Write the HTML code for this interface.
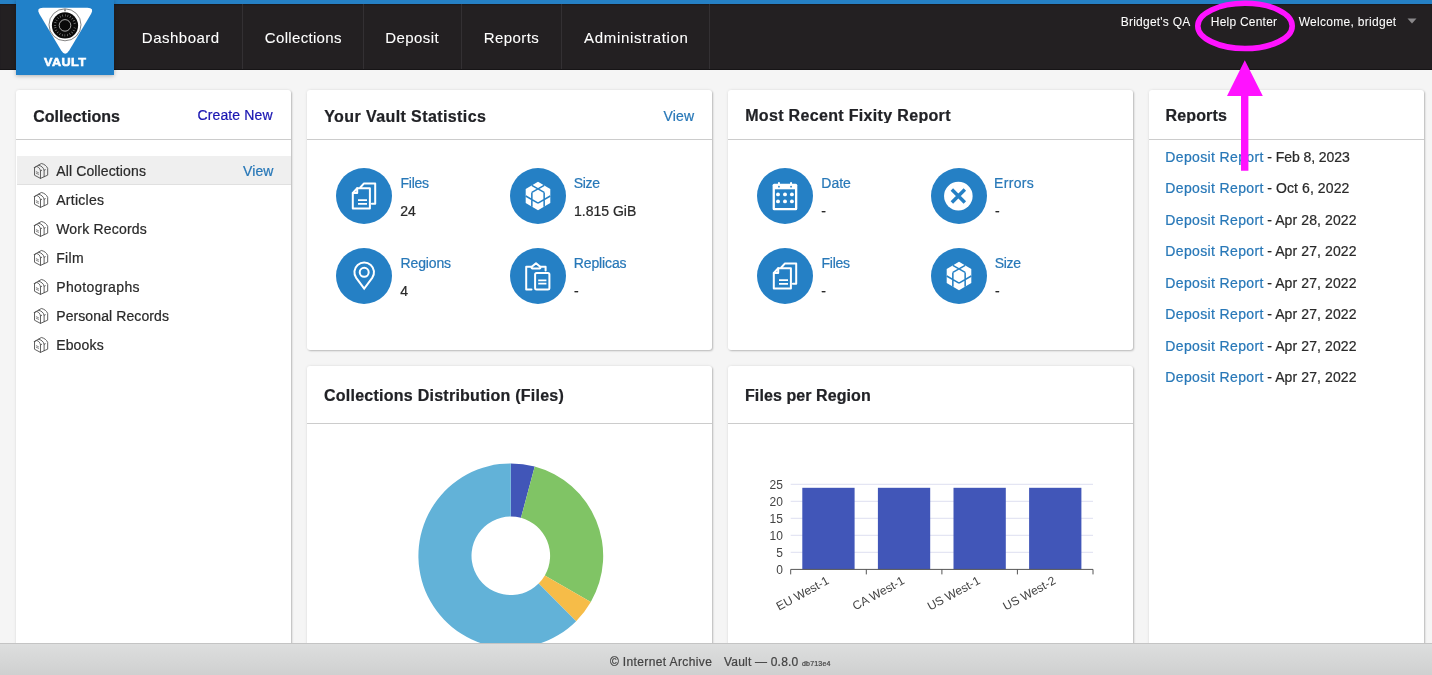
<!DOCTYPE html>
<html lang="en">
<head>
<meta charset="utf-8">
<title>Vault Dashboard</title>
<style>
html,body{margin:0;padding:0;}
body{width:1432px;height:675px;overflow:hidden;position:relative;background:#f5f5f5;
  font-family:"Liberation Sans",sans-serif;color:#2a2a2a;}
.abs{position:absolute;}
.t{position:absolute;white-space:nowrap;line-height:20px;-webkit-text-stroke:.22px;}
#wrap{position:absolute;left:0;top:0;width:1432px;height:675px;will-change:transform;}
#topbar{left:0;top:0;width:1432px;height:4px;background:#2580c5;}
#hdr{left:0;top:4px;width:1432px;height:65.6px;background:#232022;box-shadow:inset 0 -1px 0 #161416,inset 0 1px 1px #1a1a1e;}
.sep{position:absolute;top:4px;width:1px;height:65px;background:#333033;}
#logo{left:16px;top:0;width:98px;height:74.5px;background:#2181c9;box-shadow:0 1px 4px rgba(0,0,0,.28);}
.card{position:absolute;background:#fff;border-radius:3px;box-shadow:1px 1px 2px rgba(0,0,0,.22),0 0 3px rgba(0,0,0,.1);}
.hl{position:absolute;height:1px;background:#ccc;}
.lnk{color:#2176b5;}
#footer{left:0;top:643px;width:1432px;height:32px;background:linear-gradient(#dddede,#cfd0d0);border-top:1px solid #c4c4c4;box-sizing:border-box;}
</style>
</head>
<body>
<div id="wrap">
<!-- CARDS -->
<div class="card" style="left:16px;top:90px;width:275px;height:600px"></div>
<div class="card" style="left:307px;top:90px;width:405px;height:260px"></div>
<div class="card" style="left:728px;top:90px;width:405px;height:260px"></div>
<div class="card" style="left:1149px;top:90px;width:275px;height:600px"></div>
<div class="card" style="left:307px;top:366px;width:405px;height:320px"></div>
<div class="card" style="left:728px;top:366px;width:405px;height:320px"></div>
<div class="hl" style="left:16px;top:139px;width:275px"></div>
<div class="hl" style="left:307px;top:139px;width:405px"></div>
<div class="hl" style="left:728px;top:139px;width:405px"></div>
<div class="hl" style="left:1149px;top:139px;width:275px"></div>
<div class="hl" style="left:307px;top:423px;width:405px"></div>
<div class="hl" style="left:728px;top:423px;width:405px"></div>
<!-- HEADER -->
<div id="hdr" class="abs"></div>
<div id="topbar" class="abs"></div>
<div class="sep" style="left:242px"></div>
<div class="sep" style="left:363px"></div>
<div class="sep" style="left:461px"></div>
<div class="sep" style="left:561px"></div>
<div class="sep" style="left:709px"></div>
<div id="logo" class="abs">
<svg width="98" height="74" viewBox="0 0 98 74" style="position:absolute;left:0;top:0">
  <path d="M27 7.7 H71.4 Q78.6 7.7 75 14 L53.2 50.6 Q49.2 57 45.2 50.6 L23.4 14 Q19.8 7.7 27 7.7 Z" fill="#fff"/>
  <circle cx="49" cy="24.8" r="16" fill="none" stroke="#333" stroke-width=".6"/>
  <circle cx="49" cy="25.4" r="13.1" fill="#0a0a0a"/>
  <circle cx="49" cy="25.4" r="10" fill="none" stroke="#b8b8b8" stroke-width="2.2" stroke-dasharray=".42 2.198" stroke-dashoffset=".21"/>
  <circle cx="49" cy="25.4" r="5.8" fill="none" stroke="#eee" stroke-width=".7"/>
  <path d="M48 9.6 h2 l-1 2.4 z" fill="#555"/>
</svg>
<div class="t" style="left:0;width:98px;text-align:center;top:52px;font-weight:bold;font-size:11.3px;color:#fff;letter-spacing:.35px;text-indent:.35px;-webkit-text-stroke:.55px #fff;transform:scaleX(1.12);transform-origin:49px 0">VAULT</div>
</div>
<div class="t " style="left:141.8px;top:27.50px;font-size:15px;letter-spacing:0.5px;color:#fff;-webkit-text-stroke:.08px;">Dashboard</div>
<div class="t " style="left:264.8px;top:27.50px;font-size:15px;letter-spacing:0.33px;color:#fff;-webkit-text-stroke:.08px;">Collections</div>
<div class="t " style="left:385.2px;top:27.50px;font-size:15px;letter-spacing:0.42px;color:#fff;-webkit-text-stroke:.08px;">Deposit</div>
<div class="t " style="left:483.8px;top:27.50px;font-size:15px;letter-spacing:0.42px;color:#fff;-webkit-text-stroke:.08px;">Reports</div>
<div class="t " style="left:584px;top:27.50px;font-size:15px;letter-spacing:0.68px;color:#fff;-webkit-text-stroke:.08px;">Administration</div>
<div class="t " style="left:1120.8px;top:12.30px;font-size:12px;letter-spacing:0.22px;color:#fff;-webkit-text-stroke:.05px;">Bridget's QA</div>
<div class="t " style="left:1210.8px;top:12.30px;font-size:12px;letter-spacing:0.22px;color:#fff;-webkit-text-stroke:.05px;">Help Center</div>
<div class="t " style="left:1298.7px;top:12.30px;font-size:12px;letter-spacing:0.29px;color:#fff;-webkit-text-stroke:.05px;">Welcome, bridget</div>
<svg class="abs" style="left:1407px;top:18px" width="10" height="6" viewBox="0 0 10 6"><path d="M0.5 0.5 H9.5 L5 5.5 Z" fill="#8a888a"/></svg>
<!-- COL 1: Collections -->
<div class="t " style="left:33.2px;top:106.60px;font-size:16px;letter-spacing:0.05px;color:#212226;font-weight:bold;">Collections</div>
<div class="t " style="left:197.5px;top:105.00px;font-size:14px;letter-spacing:0.12px;color:#1a16b2;">Create New</div>
<div class="abs" style="left:17px;top:156px;width:274px;height:28px;background:#efefef;border-bottom:1px solid #e0e0e0"></div>
<svg class="abs" style="left:30px;top:160.0px" width="22" height="22" viewBox="0 0 22 22"><g transform="translate(11.05 11.0) scale(.96) translate(-11 -10.9)" fill="none" stroke="#505050" stroke-width=".95" stroke-linejoin="round" stroke-linecap="round"><path d="M4.2 7.2 V15.3 L10.4 18.6 L17.9 15.2 V8.2 C16.8 5.6 14.3 3.6 11.3 3.1 L4.2 7.2 Z"/><path d="M4.2 7.2 L6.6 6.2 C8.6 6.8 10.1 8.6 10.4 10.8 V18.6"/><path d="M8.3 4.9 C11.3 5.4 13.6 7.4 14.2 10.2 V16.8"/><path d="M10.4 10.8 L11.6 10.2 M14.2 10.2 L15.4 9.6"/><path d="M6 11.6 L8.4 12.8 M6 13.2 L8.4 14.4" stroke-width=".7"/></g></svg>
<div class="t " style="left:56.2px;top:161.10px;font-size:14px;letter-spacing:0.13px;">All Collections</div>
<svg class="abs" style="left:30px;top:188.9px" width="22" height="22" viewBox="0 0 22 22"><g transform="translate(11.05 11.0) scale(.96) translate(-11 -10.9)" fill="none" stroke="#505050" stroke-width=".95" stroke-linejoin="round" stroke-linecap="round"><path d="M4.2 7.2 V15.3 L10.4 18.6 L17.9 15.2 V8.2 C16.8 5.6 14.3 3.6 11.3 3.1 L4.2 7.2 Z"/><path d="M4.2 7.2 L6.6 6.2 C8.6 6.8 10.1 8.6 10.4 10.8 V18.6"/><path d="M8.3 4.9 C11.3 5.4 13.6 7.4 14.2 10.2 V16.8"/><path d="M10.4 10.8 L11.6 10.2 M14.2 10.2 L15.4 9.6"/><path d="M6 11.6 L8.4 12.8 M6 13.2 L8.4 14.4" stroke-width=".7"/></g></svg>
<div class="t " style="left:56.2px;top:190.03px;font-size:14px;letter-spacing:0.27px;">Articles</div>
<svg class="abs" style="left:30px;top:217.9px" width="22" height="22" viewBox="0 0 22 22"><g transform="translate(11.05 11.0) scale(.96) translate(-11 -10.9)" fill="none" stroke="#505050" stroke-width=".95" stroke-linejoin="round" stroke-linecap="round"><path d="M4.2 7.2 V15.3 L10.4 18.6 L17.9 15.2 V8.2 C16.8 5.6 14.3 3.6 11.3 3.1 L4.2 7.2 Z"/><path d="M4.2 7.2 L6.6 6.2 C8.6 6.8 10.1 8.6 10.4 10.8 V18.6"/><path d="M8.3 4.9 C11.3 5.4 13.6 7.4 14.2 10.2 V16.8"/><path d="M10.4 10.8 L11.6 10.2 M14.2 10.2 L15.4 9.6"/><path d="M6 11.6 L8.4 12.8 M6 13.2 L8.4 14.4" stroke-width=".7"/></g></svg>
<div class="t " style="left:56.2px;top:218.96px;font-size:14px;letter-spacing:0.2px;">Work Records</div>
<svg class="abs" style="left:30px;top:246.8px" width="22" height="22" viewBox="0 0 22 22"><g transform="translate(11.05 11.0) scale(.96) translate(-11 -10.9)" fill="none" stroke="#505050" stroke-width=".95" stroke-linejoin="round" stroke-linecap="round"><path d="M4.2 7.2 V15.3 L10.4 18.6 L17.9 15.2 V8.2 C16.8 5.6 14.3 3.6 11.3 3.1 L4.2 7.2 Z"/><path d="M4.2 7.2 L6.6 6.2 C8.6 6.8 10.1 8.6 10.4 10.8 V18.6"/><path d="M8.3 4.9 C11.3 5.4 13.6 7.4 14.2 10.2 V16.8"/><path d="M10.4 10.8 L11.6 10.2 M14.2 10.2 L15.4 9.6"/><path d="M6 11.6 L8.4 12.8 M6 13.2 L8.4 14.4" stroke-width=".7"/></g></svg>
<div class="t " style="left:56.2px;top:247.89px;font-size:14px;letter-spacing:0.33px;">Film</div>
<svg class="abs" style="left:30px;top:275.7px" width="22" height="22" viewBox="0 0 22 22"><g transform="translate(11.05 11.0) scale(.96) translate(-11 -10.9)" fill="none" stroke="#505050" stroke-width=".95" stroke-linejoin="round" stroke-linecap="round"><path d="M4.2 7.2 V15.3 L10.4 18.6 L17.9 15.2 V8.2 C16.8 5.6 14.3 3.6 11.3 3.1 L4.2 7.2 Z"/><path d="M4.2 7.2 L6.6 6.2 C8.6 6.8 10.1 8.6 10.4 10.8 V18.6"/><path d="M8.3 4.9 C11.3 5.4 13.6 7.4 14.2 10.2 V16.8"/><path d="M10.4 10.8 L11.6 10.2 M14.2 10.2 L15.4 9.6"/><path d="M6 11.6 L8.4 12.8 M6 13.2 L8.4 14.4" stroke-width=".7"/></g></svg>
<div class="t " style="left:56.2px;top:276.82px;font-size:14px;letter-spacing:0.4px;">Photographs</div>
<svg class="abs" style="left:30px;top:304.6px" width="22" height="22" viewBox="0 0 22 22"><g transform="translate(11.05 11.0) scale(.96) translate(-11 -10.9)" fill="none" stroke="#505050" stroke-width=".95" stroke-linejoin="round" stroke-linecap="round"><path d="M4.2 7.2 V15.3 L10.4 18.6 L17.9 15.2 V8.2 C16.8 5.6 14.3 3.6 11.3 3.1 L4.2 7.2 Z"/><path d="M4.2 7.2 L6.6 6.2 C8.6 6.8 10.1 8.6 10.4 10.8 V18.6"/><path d="M8.3 4.9 C11.3 5.4 13.6 7.4 14.2 10.2 V16.8"/><path d="M10.4 10.8 L11.6 10.2 M14.2 10.2 L15.4 9.6"/><path d="M6 11.6 L8.4 12.8 M6 13.2 L8.4 14.4" stroke-width=".7"/></g></svg>
<div class="t " style="left:56.2px;top:305.75px;font-size:14px;letter-spacing:0.1px;">Personal Records</div>
<svg class="abs" style="left:30px;top:333.6px" width="22" height="22" viewBox="0 0 22 22"><g transform="translate(11.05 11.0) scale(.96) translate(-11 -10.9)" fill="none" stroke="#505050" stroke-width=".95" stroke-linejoin="round" stroke-linecap="round"><path d="M4.2 7.2 V15.3 L10.4 18.6 L17.9 15.2 V8.2 C16.8 5.6 14.3 3.6 11.3 3.1 L4.2 7.2 Z"/><path d="M4.2 7.2 L6.6 6.2 C8.6 6.8 10.1 8.6 10.4 10.8 V18.6"/><path d="M8.3 4.9 C11.3 5.4 13.6 7.4 14.2 10.2 V16.8"/><path d="M10.4 10.8 L11.6 10.2 M14.2 10.2 L15.4 9.6"/><path d="M6 11.6 L8.4 12.8 M6 13.2 L8.4 14.4" stroke-width=".7"/></g></svg>
<div class="t " style="left:56.2px;top:334.68px;font-size:14px;letter-spacing:0.15px;">Ebooks</div>
<div class="t " style="left:243px;top:161.10px;font-size:14px;letter-spacing:0.13px;color:#2878b8;">View</div>
<!-- COL 2: stats -->
<div class="t " style="left:324.2px;top:106.60px;font-size:16px;letter-spacing:0.41px;color:#212226;font-weight:bold;">Your Vault Statistics</div>
<div class="t " style="left:663.4px;top:105.70px;font-size:14px;letter-spacing:0.2px;color:#2878b8;">View</div>
<svg class="abs" style="left:336.0px;top:168.0px" width="56" height="56" viewBox="0 0 56 56"><circle cx="28" cy="28" r="28" fill="#2580c5"/><g fill="none" stroke="#fff" stroke-width="2" stroke-linejoin="round" stroke-linecap="round"><path d="M24.3 19.5 L28 15.4 H39.2 V35.7 H35.9"/><path d="M21.2 20.3 H33.9 V40.6 H16.8 V25 Z" fill="#2580c5"/><path d="M16.8 25 H21.2 V20.3"/><path d="M22 32.2 H31 M22 35.8 H31" stroke-width="1.8" stroke-linecap="butt"/></g></svg>
<div class="t " style="left:400.6px;top:172.80px;font-size:14px;letter-spacing:-0.3px;color:#2878b8;">Files</div>
<div class="t " style="left:400.3px;top:200.80px;font-size:14px;">24</div>
<svg class="abs" style="left:509.7px;top:168.0px" width="56" height="56" viewBox="0 0 56 56"><circle cx="28" cy="28" r="28" fill="#2580c5"/><polygon points="28.00,13.80 40.30,20.90 40.30,35.10 28.00,42.20 15.70,35.10 15.70,20.90" fill="#fff"/><path d="M21.85 17.35 L34.15 24.45 M34.15 17.35 L21.85 24.45 M15.70 28.00 L28.00 35.10 M21.85 24.45 L21.85 38.65 M40.30 28.00 L28.00 35.10 M34.15 24.45 L34.15 38.65" stroke="#2580c5" stroke-width="1.55" fill="none"/></svg>
<div class="t " style="left:573.7px;top:172.80px;font-size:14px;letter-spacing:-0.3px;color:#2878b8;">Size</div>
<div class="t " style="left:574.0px;top:200.80px;font-size:14px;">1.815 GiB</div>
<svg class="abs" style="left:336.0px;top:248.0px" width="56" height="56" viewBox="0 0 56 56"><circle cx="28" cy="28" r="28" fill="#2580c5"/><g fill="none" stroke="#fff" stroke-width="2"><path d="M28.2 40.6 L20.2 29.9 A9.8 9.8 0 1 1 36.2 29.9 Z" stroke-linejoin="miter"/><circle cx="28.2" cy="24.3" r="4.5"/></g></svg>
<div class="t " style="left:400.6px;top:252.80px;font-size:14px;letter-spacing:-0.15px;color:#2878b8;">Regions</div>
<div class="t " style="left:400.3px;top:280.80px;font-size:14px;">4</div>
<svg class="abs" style="left:509.7px;top:248.0px" width="56" height="56" viewBox="0 0 56 56"><circle cx="28" cy="28" r="28" fill="#2580c5"/><g fill="none" stroke="#fff" stroke-width="2" stroke-linejoin="round" stroke-linecap="round"><path d="M21.5 41.4 H16.2 V18.8 H21.5 M30.5 18.8 H35.6 V22.5"/><path d="M21.5 19 L26 15.2 L30.5 19 Q30.5 20.6 28.8 20.6 H23.2 Q21.5 20.6 21.5 19 Z"/><rect x="25.1" y="25" width="14.3" height="16.4" rx="1.5"/><path d="M28.2 32.3 H36.4 M28.2 35.6 H36.4" stroke-width="1.8" stroke-linecap="butt"/></g></svg>
<div class="t " style="left:573.8px;top:252.80px;font-size:14px;letter-spacing:-0.13px;color:#2878b8;">Replicas</div>
<div class="t " style="left:574.0px;top:280.80px;font-size:14px;">-</div>
<!-- COL 3: fixity -->
<div class="abs" style="left:740px;top:100px;width:300px;height:22.9px;overflow:hidden">
<div class="t " style="left:5.2px;top:6.40px;font-size:16px;letter-spacing:0.33px;color:#212226;font-weight:bold;">Most Recent Fixity Report</div>
</div>
<svg class="abs" style="left:757.0px;top:168.0px" width="56" height="56" viewBox="0 0 56 56"><circle cx="28" cy="28" r="28" fill="#2580c5"/><path d="M21.95 14.9 V17 M34.05 14.9 V17" stroke="#fff" stroke-width="2" stroke-linecap="round"/><rect x="15.6" y="15.7" width="24.7" height="26.6" rx="1.6" fill="#fff"/><rect x="17.9" y="21.3" width="20.1" height="18.7" fill="#2580c5"/><circle cx="21.95" cy="18.7" r=".9" fill="#2580c5"/><circle cx="34.05" cy="18.7" r=".9" fill="#2580c5"/><circle cx="21" cy="26.4" r="1.95" fill="#fff"/><circle cx="28" cy="26.4" r="1.95" fill="#fff"/><circle cx="34.9" cy="26.4" r="1.95" fill="#fff"/><circle cx="21" cy="33.4" r="1.95" fill="#fff"/><circle cx="28" cy="33.4" r="1.95" fill="#fff"/><circle cx="34.9" cy="33.4" r="1.95" fill="#fff"/></svg>
<div class="t " style="left:821.3px;top:172.80px;font-size:14px;color:#2878b8;">Date</div>
<div class="t " style="left:821.3px;top:200.80px;font-size:14px;">-</div>
<svg class="abs" style="left:930.7px;top:168.0px" width="56" height="56" viewBox="0 0 56 56"><circle cx="28" cy="28" r="28" fill="#2580c5"/><circle cx="27.35" cy="28.1" r="14.3" fill="#fff"/><path d="M20.85 21.6 L33.85 34.6 M33.85 21.6 L20.85 34.6" stroke="#2580c5" stroke-width="3.5"/></svg>
<div class="t " style="left:994.1px;top:172.80px;font-size:14px;letter-spacing:0.3px;color:#2878b8;">Errors</div>
<div class="t " style="left:995.0px;top:200.80px;font-size:14px;">-</div>
<svg class="abs" style="left:757.0px;top:248.0px" width="56" height="56" viewBox="0 0 56 56"><circle cx="28" cy="28" r="28" fill="#2580c5"/><g fill="none" stroke="#fff" stroke-width="2" stroke-linejoin="round" stroke-linecap="round"><path d="M24.3 19.5 L28 15.4 H39.2 V35.7 H35.9"/><path d="M21.2 20.3 H33.9 V40.6 H16.8 V25 Z" fill="#2580c5"/><path d="M16.8 25 H21.2 V20.3"/><path d="M22 32.2 H31 M22 35.8 H31" stroke-width="1.8" stroke-linecap="butt"/></g></svg>
<div class="t " style="left:821.6px;top:252.80px;font-size:14px;letter-spacing:-0.3px;color:#2878b8;">Files</div>
<div class="t " style="left:821.3px;top:280.80px;font-size:14px;">-</div>
<svg class="abs" style="left:930.7px;top:248.0px" width="56" height="56" viewBox="0 0 56 56"><circle cx="28" cy="28" r="28" fill="#2580c5"/><polygon points="28.00,13.80 40.30,20.90 40.30,35.10 28.00,42.20 15.70,35.10 15.70,20.90" fill="#fff"/><path d="M21.85 17.35 L34.15 24.45 M34.15 17.35 L21.85 24.45 M15.70 28.00 L28.00 35.10 M21.85 24.45 L21.85 38.65 M40.30 28.00 L28.00 35.10 M34.15 24.45 L34.15 38.65" stroke="#2580c5" stroke-width="1.55" fill="none"/></svg>
<div class="t " style="left:994.7px;top:252.80px;font-size:14px;letter-spacing:-0.3px;color:#2878b8;">Size</div>
<div class="t " style="left:995.0px;top:280.80px;font-size:14px;">-</div>
<!-- COL 4: reports -->
<div class="abs" style="left:1160px;top:100px;width:200px;height:22.9px;overflow:hidden">
<div class="t " style="left:5.5px;top:6.40px;font-size:16px;letter-spacing:0.14px;color:#212226;font-weight:bold;">Reports</div>
</div>
<div class="t " style="left:1165.3px;top:146.70px;font-size:14px;letter-spacing:0.36px;color:#2878b8;">Deposit Report</div>
<div class="t " style="left:1267.2px;top:146.70px;font-size:14px;letter-spacing:-0.05px;">- Feb 8, 2023</div>
<div class="t " style="left:1165.3px;top:178.20px;font-size:14px;letter-spacing:0.36px;color:#2878b8;">Deposit Report</div>
<div class="t " style="left:1267.2px;top:178.20px;font-size:14px;letter-spacing:0.1px;">- Oct 6, 2022</div>
<div class="t " style="left:1165.3px;top:209.70px;font-size:14px;letter-spacing:0.36px;color:#2878b8;">Deposit Report</div>
<div class="t " style="left:1267.2px;top:209.70px;font-size:14px;letter-spacing:0.1px;">- Apr 28, 2022</div>
<div class="t " style="left:1165.3px;top:241.20px;font-size:14px;letter-spacing:0.36px;color:#2878b8;">Deposit Report</div>
<div class="t " style="left:1267.2px;top:241.20px;font-size:14px;letter-spacing:0.1px;">- Apr 27, 2022</div>
<div class="t " style="left:1165.3px;top:272.70px;font-size:14px;letter-spacing:0.36px;color:#2878b8;">Deposit Report</div>
<div class="t " style="left:1267.2px;top:272.70px;font-size:14px;letter-spacing:0.1px;">- Apr 27, 2022</div>
<div class="t " style="left:1165.3px;top:304.20px;font-size:14px;letter-spacing:0.36px;color:#2878b8;">Deposit Report</div>
<div class="t " style="left:1267.2px;top:304.20px;font-size:14px;letter-spacing:0.1px;">- Apr 27, 2022</div>
<div class="t " style="left:1165.3px;top:335.70px;font-size:14px;letter-spacing:0.36px;color:#2878b8;">Deposit Report</div>
<div class="t " style="left:1267.2px;top:335.70px;font-size:14px;letter-spacing:0.1px;">- Apr 27, 2022</div>
<div class="t " style="left:1165.3px;top:367.20px;font-size:14px;letter-spacing:0.36px;color:#2878b8;">Deposit Report</div>
<div class="t " style="left:1267.2px;top:367.20px;font-size:14px;letter-spacing:0.1px;">- Apr 27, 2022</div>
<div class="t " style="left:324px;top:385.50px;font-size:16px;letter-spacing:0.25px;color:#212226;font-weight:bold;">Collections Distribution (Files)</div>
<div class="t " style="left:745px;top:385.50px;font-size:16px;letter-spacing:0.08px;color:#212226;font-weight:bold;">Files per Region</div>
<!-- DONUT -->
<svg class="abs" style="left:307px;top:424px" width="405" height="251" viewBox="307 424 405 251"><path d="M510.80 463.40 A92.4 92.4 0 0 1 534.71 466.55 L520.97 517.84 A39.3 39.3 0 0 0 510.80 516.50 Z" fill="#4156b8"/><path d="M534.71 466.55 A92.4 92.4 0 0 1 590.82 602.00 L544.83 575.45 A39.3 39.3 0 0 0 520.97 517.84 Z" fill="#80c465"/><path d="M590.82 602.00 A92.4 92.4 0 0 1 576.14 621.14 L538.59 583.59 A39.3 39.3 0 0 0 544.83 575.45 Z" fill="#f6bc48"/><path d="M576.14 621.14 A92.4 92.4 0 1 1 510.80 463.40 L510.80 516.50 A39.3 39.3 0 1 0 538.59 583.59 Z" fill="#62b2d8"/></svg>
<!-- BARS -->
<svg class="abs" style="left:728px;top:424px;font-family:'Liberation Sans',sans-serif" width="405" height="251" viewBox="728 424 405 251"><text x="782.9" y="573.7" font-size="12" fill="#444" text-anchor="end">0</text><path d="M790.7 552.4 H1093.0" stroke="#e4e5f3" stroke-width="1.2"/><text x="782.9" y="556.7" font-size="12" fill="#444" text-anchor="end">5</text><path d="M790.7 535.4 H1093.0" stroke="#e4e5f3" stroke-width="1.2"/><text x="782.9" y="539.7" font-size="12" fill="#444" text-anchor="end">10</text><path d="M790.7 518.4 H1093.0" stroke="#e4e5f3" stroke-width="1.2"/><text x="782.9" y="522.7" font-size="12" fill="#444" text-anchor="end">15</text><path d="M790.7 501.4 H1093.0" stroke="#e4e5f3" stroke-width="1.2"/><text x="782.9" y="505.7" font-size="12" fill="#444" text-anchor="end">20</text><path d="M790.7 484.4 H1093.0" stroke="#e4e5f3" stroke-width="1.2"/><text x="782.9" y="488.7" font-size="12" fill="#444" text-anchor="end">25</text><rect x="802.3" y="487.8" width="52.3" height="81.6" fill="#4156b8"/><rect x="877.9" y="487.8" width="52.3" height="81.6" fill="#4156b8"/><rect x="953.5" y="487.8" width="52.3" height="81.6" fill="#4156b8"/><rect x="1029.1" y="487.8" width="52.3" height="81.6" fill="#4156b8"/><path d="M790.7 569.4 H1093.0 M790.7 569.4 v5 M866.3 569.4 v5 M941.9 569.4 v5 M1017.4 569.4 v5 M1093.0 569.4 v5" stroke="#555" stroke-width="1" fill="none"/><text transform="translate(825.7 575.4) rotate(-28.5)" font-size="12" fill="#444" text-anchor="end" dominant-baseline="hanging">EU West-1</text><text transform="translate(901.3 575.4) rotate(-28.5)" font-size="12" fill="#444" text-anchor="end" dominant-baseline="hanging">CA West-1</text><text transform="translate(976.8 575.4) rotate(-28.5)" font-size="12" fill="#444" text-anchor="end" dominant-baseline="hanging">US West-1</text><text transform="translate(1052.4 575.4) rotate(-28.5)" font-size="12" fill="#444" text-anchor="end" dominant-baseline="hanging">US West-2</text></svg>
<!-- FOOTER -->
<div id="footer" class="abs"></div>
<div class="t " style="left:609.9px;top:652.00px;font-size:12px;letter-spacing:0.38px;color:#444;">© Internet Archive</div>
<div class="t " style="left:724px;top:652.00px;font-size:12px;letter-spacing:0.2px;color:#444;">Vault — 0.8.0 <span style="font-size:7px">db713e4</span></div>
<!-- ANNOTATION -->
<svg class="abs" style="left:1180px;top:0" width="130" height="180" viewBox="1180 0 130 180"><ellipse cx="1245" cy="25.9" rx="47.2" ry="22.6" fill="none" stroke="#ff12ff" stroke-width="5.6"/><path d="M1244.8 60.2 L1262.8 96.1 H1248.4 V170.7 H1241 V96.1 H1227 Z" fill="#ff12ff"/></svg>
</div>
</body>
</html>
